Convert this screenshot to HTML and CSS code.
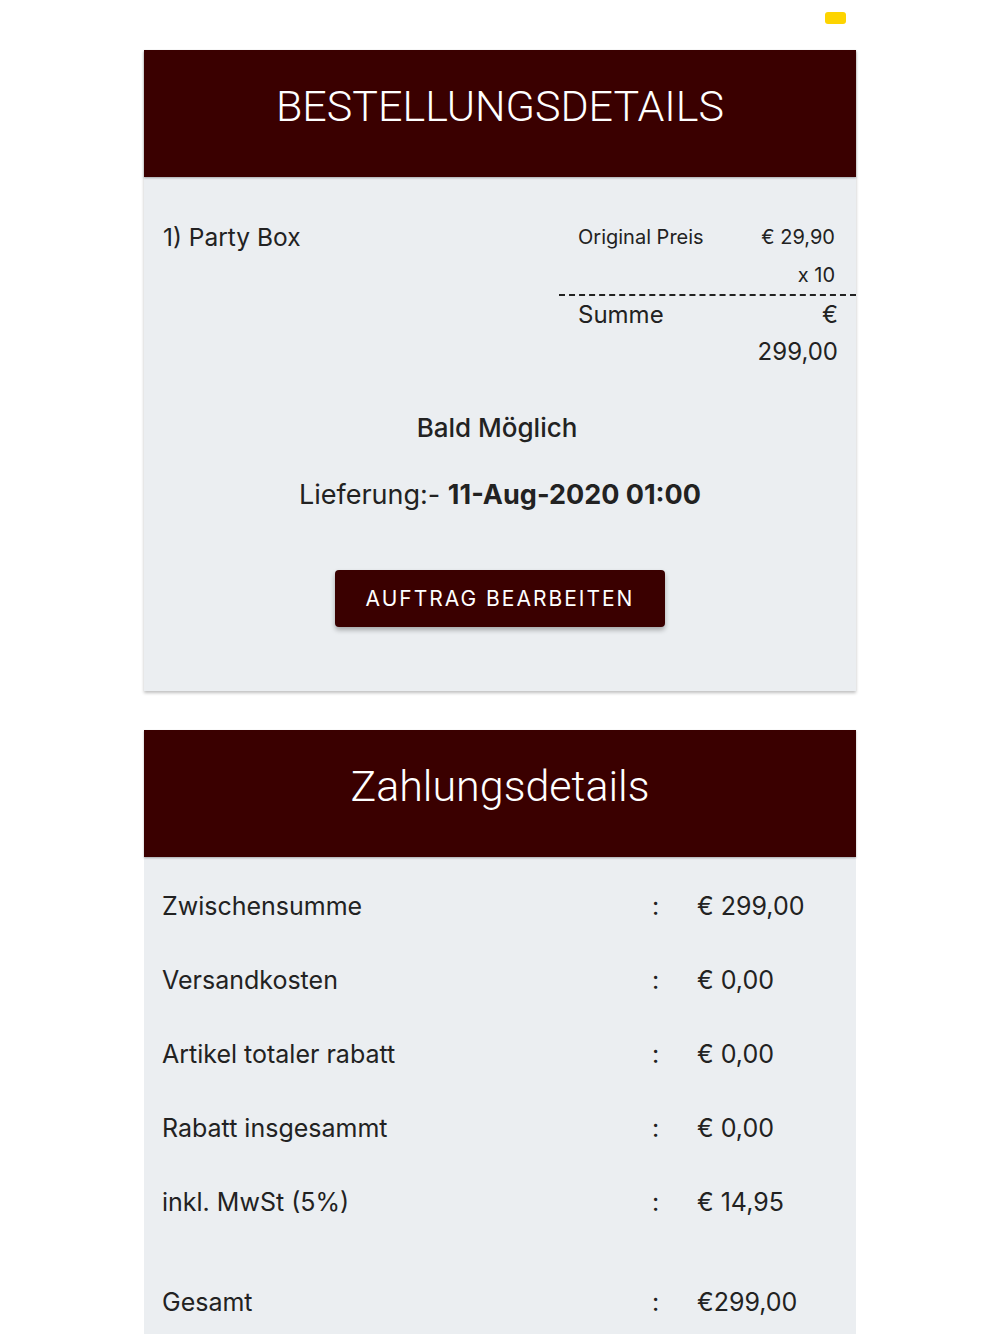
FILE: index.html
```html
<!DOCTYPE html>
<html lang="de">
<head>
<meta charset="utf-8">
<title>Bestellungsdetails</title>
<link rel="stylesheet" href="styles.css">
</head>
<body>
<div class="page">
  <span class="pill"></span>

  <section class="card">
    <header class="card-head"><h1>BESTELLUNGSDETAILS</h1></header>
    <div class="card-body order">
      <div class="item">
        <div class="item-name">1) Party Box</div>
        <div class="calc">
          <div class="calc-row small">
            <span>Original Preis</span><span class="val">€ 29,90</span>
          </div>
          <div class="calc-row small">
            <span></span><span class="val">x 10</span>
          </div>
          <div class="calc-row total">
            <span>Summe</span><span class="val sum">€ 299,00</span>
          </div>
        </div>
      </div>
      <p class="soon">Bald Möglich</p>
      <p class="delivery">Lieferung:- <strong>11-Aug-2020 01:00</strong></p>
      <div class="btn-wrap"><button class="btn">AUFTRAG BEARBEITEN</button></div>
    </div>
  </section>

  <section class="card second">
    <header class="card-head"><h1>Zahlungsdetails</h1></header>
    <div class="card-body pay">
      <div class="pay-row"><span>Zwischensumme</span><span>:</span><span>€ 299,00</span></div>
      <div class="pay-row"><span>Versandkosten</span><span>:</span><span>€ 0,00</span></div>
      <div class="pay-row"><span>Artikel totaler rabatt</span><span>:</span><span>€ 0,00</span></div>
      <div class="pay-row"><span>Rabatt insgesammt</span><span>:</span><span>€ 0,00</span></div>
      <div class="pay-row"><span>inkl. MwSt (5%)</span><span>:</span><span>€ 14,95</span></div>
      <div class="pay-row grand"><span>Gesamt</span><span>:</span><span>€299,00</span></div>
    </div>
  </section>
</div>
</body>
</html>
```

FILE: styles.css
```css
html, body {
  margin: 0;
  padding: 0;
  background: #ffffff;
  font-family: Inter, Roboto, "Liberation Sans", sans-serif;
  color: #222222;
}

.page {
  position: relative;
  padding-top: 50px;
  height: 1284px;
  overflow: hidden;
}

.pill {
  position: absolute;
  top: 12px;
  left: 825px;
  width: 21px;
  height: 12px;
  border-radius: 3px;
  background: #fdd400;
}

.card {
  width: 712px;
  margin: 0 auto;
  background: #ebeef1;
  box-shadow: 0 2px 3px rgba(0, 0, 0, 0.25);
}

.card.second {
  margin-top: 39px;
  box-shadow: none;
}

.card-head {
  background: #3a0000;
  height: 127px;
  display: flex;
  align-items: center;
  justify-content: center;
  box-shadow: 0 1px 2px rgba(0, 0, 0, 0.3);
}

.card-head h1 {
  margin: 0 0 16px;
  font-family: Roboto, Inter, sans-serif;
  font-weight: 300;
  font-size: 43px;
  color: #ffffff;
  letter-spacing: 0;
}

.card-body.order {
  padding: 41px 0 64px;
}

.item {
  display: flex;
  justify-content: space-between;
  align-items: flex-start;
}

.item-name {
  padding-left: 19px;
  font-size: 24.5px;
  line-height: 38px;
}

.calc {
  width: 297px;
}

.calc-row {
  display: grid;
  grid-template-columns: 1fr auto;
  padding: 0 21px 0 19px;
}

.calc-row.small {
  font-size: 20px;
  line-height: 38px;
}

.calc-row.total {
  border-top: 2px dashed #222222;
  font-size: 24px;
  line-height: 37px;
  padding-right: 18px;
}

.val {
  text-align: right;
}

.val.sum {
  width: 84px;
}

.soon {
  margin: 40px 0 0;
  padding-right: 6px;
  text-align: center;
  font-size: 26px;
  font-weight: 500;
  line-height: 36px;
}

.delivery {
  margin: 31px 0 0;
  text-align: center;
  font-size: 27px;
  line-height: 36px;
}

.delivery strong {
  font-weight: 700;
}

.btn-wrap {
  display: flex;
  justify-content: center;
  margin-top: 57px;
}

.btn {
  width: 330px;
  height: 57px;
  border: none;
  border-radius: 4px;
  background: #3a0000;
  color: #ffffff;
  font-family: Inter, Roboto, sans-serif;
  font-size: 21px;
  letter-spacing: 2px;
  box-shadow: 0 3px 5px rgba(0, 0, 0, 0.3);
}

.card-body.pay {
  padding-top: 12px;
  padding-bottom: 20px;
}

.pay-row {
  display: grid;
  grid-template-columns: 1fr 45px 159px;
  padding-left: 18px;
  font-size: 25px;
  line-height: 74px;
}

.pay-row.grand {
  margin-top: 26px;
}
```
